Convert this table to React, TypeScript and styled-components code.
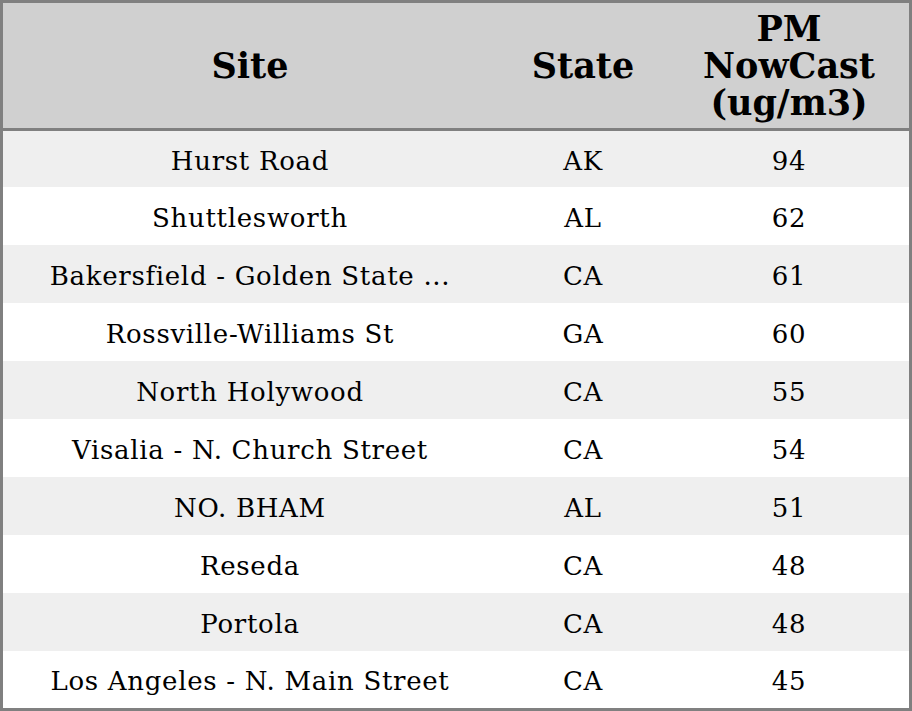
import React from 'react'
import styled, { createGlobalStyle } from 'styled-components'

const GlobalStyle = createGlobalStyle`
  html, body {
    margin: 0;
    padding: 0;
    background: #ffffff;
  }
`

const Table = styled.table`
  width: 912px;
  border-collapse: separate;
  border-spacing: 0;
  border: 3px solid #808080;
  font-family: "DejaVu Serif", serif;
  color: #000;
  table-layout: fixed;
`

const HeadRow = styled.tr`
  background: #d0d0d0;
  height: 128px;
`

const HeadCell = styled.th<{ $w: number }>`
  width: ${(p) => p.$w}px;
  font-size: 35px;
  font-weight: bold;
  line-height: 37px;
  text-align: center;
  padding: 0;
  border-bottom: 3px solid #808080;
`

const Row = styled.tr<{ $odd: boolean; $h: number }>`
  background: ${(p) => (p.$odd ? '#efefef' : '#ffffff')};
  height: ${(p) => p.$h}px;
`

const Cell = styled.td`
  font-size: 26px;
  letter-spacing: 0.7px;
  text-align: center;
  padding: 3px 0 0 0;
  white-space: nowrap;
`

type Site = { name: string; state: string; pm: number }

const sites: Site[] = [
  { name: 'Hurst Road', state: 'AK', pm: 94 },
  { name: 'Shuttlesworth', state: 'AL', pm: 62 },
  { name: 'Bakersfield - Golden State ...', state: 'CA', pm: 61 },
  { name: 'Rossville-Williams St', state: 'GA', pm: 60 },
  { name: 'North Holywood', state: 'CA', pm: 55 },
  { name: 'Visalia - N. Church Street', state: 'CA', pm: 54 },
  { name: 'NO. BHAM', state: 'AL', pm: 51 },
  { name: 'Reseda', state: 'CA', pm: 48 },
  { name: 'Portola', state: 'CA', pm: 48 },
  { name: 'Los Angeles - N. Main Street', state: 'CA', pm: 45 },
]

const rowHeight = (i: number) => (i === 0 ? 56 : i === sites.length - 1 ? 57 : 58)

export default function App() {
  return (
    <>
      <GlobalStyle />
      <Table>
        <thead>
          <HeadRow>
            <HeadCell $w={494}>Site</HeadCell>
            <HeadCell $w={172}>State</HeadCell>
            <HeadCell $w={240}>
              PM
              <br />
              NowCast
              <br />
              (ug/m3)
            </HeadCell>
          </HeadRow>
        </thead>
        <tbody>
          {sites.map((s, i) => (
            <Row key={s.name} $odd={i % 2 === 0} $h={rowHeight(i)}>
              <Cell>{s.name}</Cell>
              <Cell>{s.state}</Cell>
              <Cell>{s.pm}</Cell>
            </Row>
          ))}
        </tbody>
      </Table>
    </>
  )
}
